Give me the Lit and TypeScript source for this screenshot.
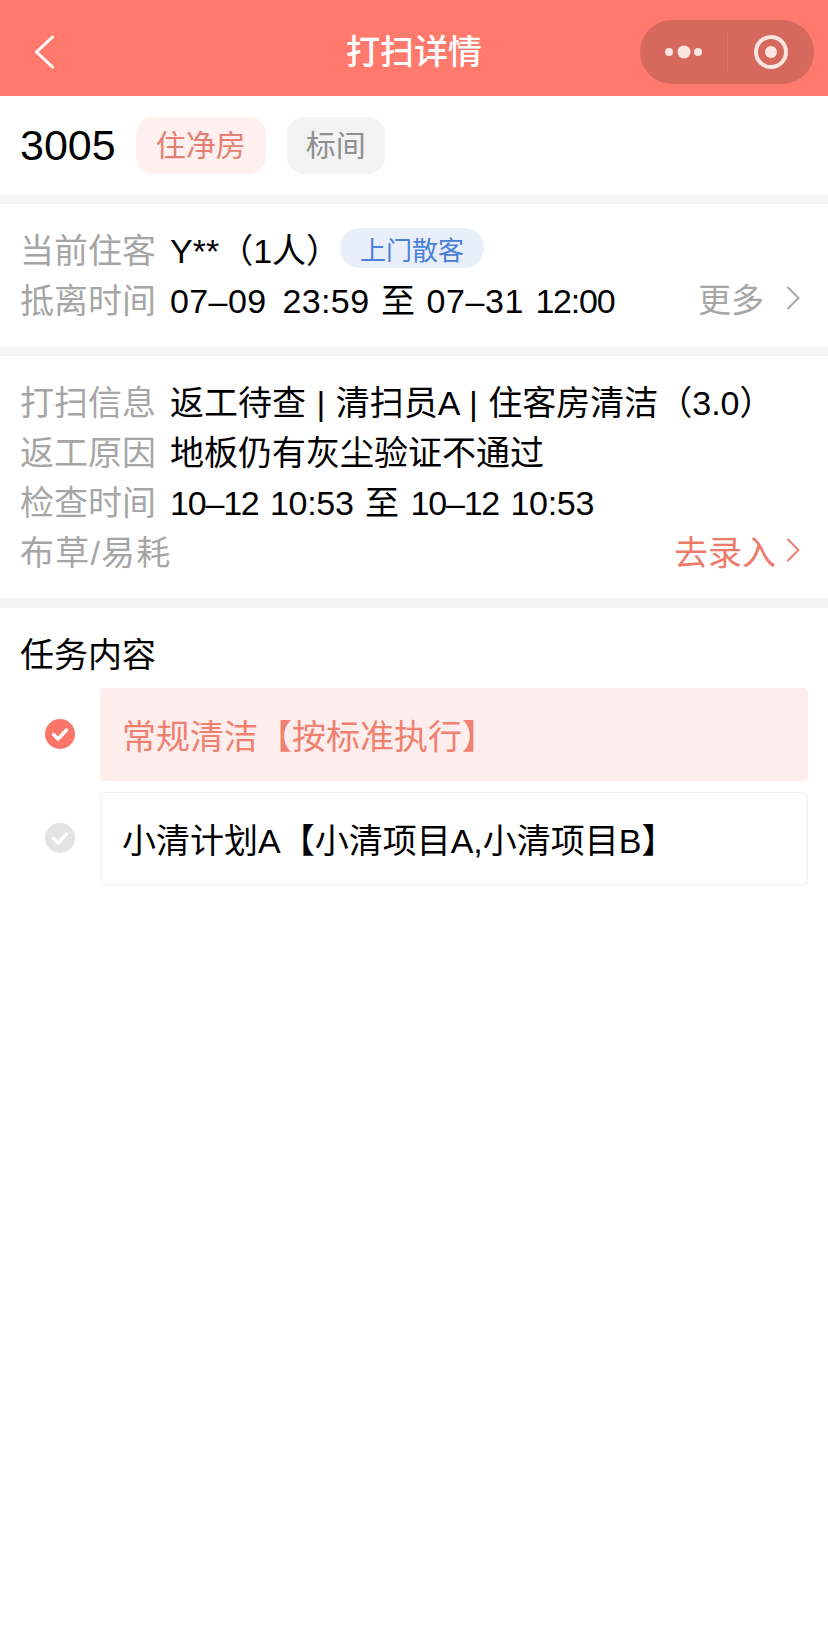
import { LitElement, html, css } from "lit";
import { customElement } from "lit/decorators.js";

const chevron = () => html`<svg class="chev" viewBox="0 0 14 24" width="14" height="24"><path d="M2 1.5 L12.5 12 L2 22.5" fill="none" stroke="currentColor" stroke-width="2" stroke-linecap="round" stroke-linejoin="round"/></svg>`;
const check = (cls: string) => html`<svg class="check ${cls}" viewBox="0 0 30 30" width="30" height="30"><circle cx="15" cy="15" r="15" fill="currentColor"/><path d="M8.5 15.5 L13 20 L21.5 11" fill="none" stroke="#fff" stroke-width="3.4" stroke-linecap="round" stroke-linejoin="round"/></svg>`;

@customElement("app-root")
export class AppRoot extends LitElement {
  static styles = css`
    :host { display: block; width: 828px; min-height: 1645px; background: #fff; color: #000;
      font-family: "Liberation Sans", "Noto Sans CJK SC", sans-serif; font-size: 34px; }
    .nav { position: relative; height: 96px; background: #ff7a6c; display: flex; align-items: center; justify-content: center; padding-top: 8px; box-sizing: border-box; }
    .nav .title { color: #fff; font-weight: 500; font-size: 34px; line-height: 48px; }
    .back { position: absolute; left: 33px; top: 35px; }
    .capsule { position: absolute; left: 640px; top: 20px; width: 174px; height: 64px; }
    .head { height: 98px; display: flex; align-items: center; padding: 0 20px; box-sizing: border-box; }
    .room { font-size: 43px; margin-right: 20px; }
    .tag { height: 57px; display: flex; align-items: center; border-radius: 17px; font-size: 30px; padding: 0 20px 4px; box-sizing: border-box; }
    .tag.pink { background: #fdf0ee; color: #e57f74; margin-right: 21px; }
    .tag.grey { background: #f3f3f3; color: #8f8f8f; padding: 0 19px 4px; }
    .sec { border-top: 10px solid #f5f5f5; padding: 21px 20px; }
    .row { display: flex; align-items: center; height: 50px; padding-bottom: 4px; box-sizing: border-box; white-space: nowrap; }
    .lab { color: #a6a6a6; width: 150px; flex: none; }
    .lab.slash { letter-spacing: 1.2px; }
    .val { flex: 1; display: flex; align-items: center; }
    .ws { white-space: pre; }
    .line { word-spacing: 2px; }
    .pipes { word-spacing: 1px; }
    .wide { word-spacing: 6px; letter-spacing: 0.4px; }
    .date { letter-spacing: 0.6px; }
    .tight { letter-spacing: -1.2px; }
    .tm { letter-spacing: -0.3px; }
    .cust { background: #e8effb; color: #4a80d8; font-size: 26px; height: 40px; border-radius: 20px; padding: 0 20px; display: flex; align-items: center; }
    .more { color: #a6a6a6; display: flex; align-items: center; font-size: 33px; margin-right: 8px; }
    .more .chev { margin-left: 22px; }
    .go { color: #ee7a6c; display: flex; align-items: center; font-size: 34px; margin-right: 8px; }
    .go .chev { margin-left: 10px; }
    .tasks { border-top: 10px solid #f5f5f5; padding: 22px 20px 0; }
    .tasks h2 { margin: 0 0 8px; font-weight: 400; font-size: 34px; line-height: 50px; }
    .list { display: flex; flex-direction: column; gap: 11px; }
    .item { display: flex; align-items: center; }
    .check { flex: none; margin: 0 25px 2px; }
    .check.on { color: #fa7568; }
    .check.off { color: #e3e3e3; }
    .card { flex: 1; height: 93px; display: flex; align-items: center; padding: 0 22px; box-sizing: border-box; border-radius: 4px; font-size: 34px; }
    .card.on { background: #fdeded; color: #f0806f; }
    .card.off { border: 1px solid #f0f0f0; padding: 0 21px; }
  `;
  render() {
    return html`
      <div class="nav">
        <svg class="back" viewBox="0 0 22 34" width="22" height="34"><path d="M19.5 2 L3.5 17 L19.5 32" fill="none" stroke="#fff" stroke-width="3" stroke-linecap="round" stroke-linejoin="round"/></svg>
        <div class="title">打扫详情</div>
        <svg class="capsule" viewBox="0 0 174 64">
          <rect width="174" height="64" rx="32" fill="#d5695d"/>
          <rect x="87" y="12" width="1" height="39" fill="#e07567"/>
          <circle cx="29" cy="32" r="4" fill="#fbe6e1"/>
          <circle cx="44" cy="32" r="6.5" fill="#fbe6e1"/>
          <circle cx="58" cy="32" r="4" fill="#fbe6e1"/>
          <circle cx="131" cy="32" r="15" fill="none" stroke="#fbe6e1" stroke-width="4"/>
          <circle cx="131" cy="32" r="6" fill="#fbe6e1"/>
        </svg>
      </div>
      <div class="head">
        <span class="room">3005</span>
        <span class="tag pink">住净房</span>
        <span class="tag grey">标间</span>
      </div>
      <div class="sec">
        <div class="row"><span class="lab">当前住客</span><span class="val">Y**（1人）<span class="cust">上门散客</span></span></div>
        <div class="row"><span class="lab">抵离时间</span><span class="val ws"><span class="line"><span class="wide">07–09 23:59</span> 至 <span class="date">07–31</span> <span class="tight">12:00</span></span></span><span class="more">更多${chevron()}</span></div>
      </div>
      <div class="sec">
        <div class="row"><span class="lab">打扫信息</span><span class="val ws pipes">返工待查 | 清扫员A | 住客房清洁（3.0）</span></div>
        <div class="row"><span class="lab">返工原因</span><span class="val">地板仍有灰尘验证不通过</span></div>
        <div class="row"><span class="lab">检查时间</span><span class="val ws"><span class="line"><span class="tight">10–12</span> <span class="tm">10:53</span> 至 <span class="tight">10–12</span> <span class="tm">10:53</span></span></span></div>
        <div class="row"><span class="lab slash">布草/易耗</span><span class="val"></span><span class="go">去录入${chevron()}</span></div>
      </div>
      <div class="tasks">
        <h2>任务内容</h2>
        <div class="list">
          <div class="item">${check("on")}<div class="card on">常规清洁【按标准执行】</div></div>
          <div class="item">${check("off")}<div class="card off">小清计划A【小清项目A,小清项目B】</div></div>
        </div>
      </div>
    `;
  }
}
